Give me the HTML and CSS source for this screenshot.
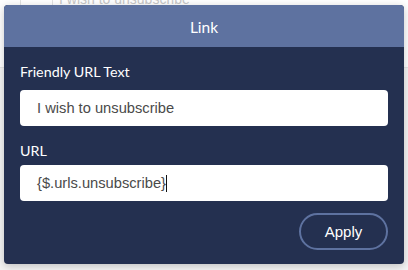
FILE: index.html
```html
<!DOCTYPE html>
<html>
<head>
<meta charset="utf-8">
<link rel="stylesheet" href="styles.css">
</head>
<body>
<div class="backdrop">
  <div class="bg-row">
    <div class="bg-cell bg-cell-a"></div>
    <div class="bg-cell bg-cell-b">I wish to unsubscribe</div>
  </div>
  <div class="bg-band"></div>
</div>
<div class="modal">
  <div class="modal-header">Link</div>
  <div class="modal-body">
    <label class="field-label">Friendly URL Text</label>
    <div class="field-input">I wish to unsubscribe</div>
    <label class="field-label field-label-2">URL</label>
    <div class="field-input">{$.urls.unsubscribe}<span class="caret"></span></div>
    <div class="actions">
      <button class="btn-apply">Apply</button>
    </div>
  </div>
</div>
</body>
</html>
```
FILE: styles.css
```css
* { box-sizing: border-box; }
html, body { margin: 0; padding: 0; }
body {
  width: 408px;
  height: 270px;
  overflow: hidden;
  background: #ffffff;
  position: relative;
  font-family: "Lato", "Noto Sans", sans-serif;
}
.backdrop {
  height: 270px;
  display: flex;
  flex-direction: column;
}
.bg-row {
  height: 68px;
  display: flex;
  background: #ffffff;
  border-bottom: 1px solid #e6e6e6;
}
.bg-cell-a {
  width: 21px;
  border-right: 1px solid #e2e2e2;
}
.bg-cell-b {
  flex: 1;
  margin-left: 31px;
  padding-left: 6px;
  border-left: 1px solid #e2e2e2;
  font-family: "Liberation Sans", sans-serif;
  font-size: 14px;
  color: #c8c8c8;
  line-height: 14px;
  margin-top: -8px;
}
.bg-band {
  flex: 1;
  background: #f4f4f4;
}
.modal {
  position: absolute;
  top: 5px;
  left: 4px;
  width: 400px;
  border-radius: 4px;
  overflow: hidden;
  background: #243050;
  box-shadow: 0 2px 8px rgba(0, 0, 0, 0.22);
}
.modal-header {
  height: 42px;
  background: #5e72a0;
  color: #ffffff;
  font-size: 15.5px;
  display: flex;
  align-items: center;
  justify-content: center;
  padding-top: 2px;
}
.modal-body {
  padding: 15px 16px 14px 16px;
  display: flex;
  flex-direction: column;
}
.field-label {
  color: #ffffff;
  font-size: 14.3px;
  line-height: 20px;
  margin-bottom: 8px;
}
.field-label-2 {
  margin-top: 15px;
  margin-bottom: 4px;
}
.field-input {
  height: 36px;
  background: #ffffff;
  border-radius: 4px;
  padding: 0 17px;
  display: flex;
  align-items: center;
  font-family: "Liberation Sans", sans-serif;
  font-size: 14.7px;
  color: #4a4a4a;
}
.caret {
  display: inline-block;
  width: 1px;
  height: 17px;
  background: #111111;
}
.actions {
  display: flex;
  justify-content: flex-end;
  margin-top: 12px;
}
.btn-apply {
  width: 89px;
  height: 37px;
  border: 2px solid #5e72a0;
  border-radius: 19px;
  background: transparent;
  color: #ffffff;
  font-family: "Liberation Sans", sans-serif;
  font-size: 15px;
  padding: 0;
}
```
